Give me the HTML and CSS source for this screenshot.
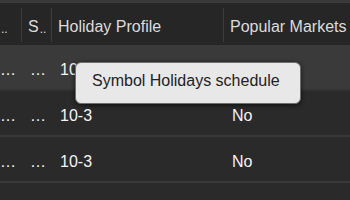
FILE: index.html
```html
<!DOCTYPE html>
<html>
<head>
<meta charset="utf-8">
<link rel="stylesheet" href="styles.css">
</head>
<body>
<div class="grid-wrap">
  <div class="topstrip"></div>
  <div class="row head">
    <div class="hcell"><span class="hlabel first"><span class="dots">..</span></span></div>
    <div class="hcell"><span class="hlabel">S<span class="dots">..</span></span></div>
    <div class="hcell"><span class="hlabel">Holiday Profile</span></div>
    <div class="hcell"><span class="hlabel last">Popular Markets</span></div>
  </div>
  <div class="row body hover">
    <div class="cell first">…</div>
    <div class="cell">…</div>
    <div class="cell">10-3</div>
    <div class="cell">No</div>
  </div>
  <div class="row body">
    <div class="cell first">…</div>
    <div class="cell">…</div>
    <div class="cell">10-3</div>
    <div class="cell">No</div>
  </div>
  <div class="row body">
    <div class="cell first">…</div>
    <div class="cell">…</div>
    <div class="cell">10-3</div>
    <div class="cell">No</div>
  </div>
  <div class="row body">
    <div class="cell first">…</div>
    <div class="cell">…</div>
    <div class="cell">10-3</div>
    <div class="cell">No</div>
  </div>
  <div class="tooltip">Symbol Holidays schedule</div>
</div>
</body>
</html>
```

FILE: styles.css
```css
html, body {
  margin: 0;
  padding: 0;
  background: #2a2a2a;
}
body {
  width: 350px;
  height: 200px;
  overflow: hidden;
  font-family: "Liberation Sans", Arial, sans-serif;
  font-size: 16px;
}
.grid-wrap {
  position: relative;
  width: 350px;
  height: 200px;
  overflow: hidden;
}
.topstrip {
  height: 3px;
  background: #3b3b3b;
}
.row {
  display: grid;
  grid-template-columns: 22px 30px 172px 220px;
  width: 444px;
}
.head {
  height: 42px;
  background: #262626;
}
.hcell {
  display: flex;
  align-items: stretch;
  padding: 5px 0 3px;
  overflow: hidden;
}
.hlabel {
  flex: 1;
  display: flex;
  align-items: center;
  padding: 3px 0 0 6px;
  border-right: 1px solid #3c3c3c;
  color: #dcdcdc;
  white-space: nowrap;
  overflow: hidden;
  line-height: 18px;
}
.hlabel.first {
  padding-left: 0;
}
.hlabel.last {
  border-right: none;
}
.dots {
  font-size: 12px;
  margin-left: 1px;
  align-self: center;
  padding-top: 5px;
}
.body {
  height: 44px;
  border-bottom: 2px solid #383838;
  background: #2a2a2a;
}
.body.hover {
  background: #3a3a3a;
  border-bottom-color: #323232;
}
.cell {
  display: flex;
  align-items: center;
  padding: 5px 0 0 8px;
  color: #f4f4f4;
  white-space: nowrap;
  overflow: hidden;
  line-height: 18px;
}
.cell.first {
  padding-left: 0;
}
.tooltip {
  position: absolute;
  left: 75px;
  top: 62px;
  width: 193px;
  height: 18px;
  padding: 9px 15px 13px 16px;
  box-sizing: content-box;
  background: #e8e8e8;
  border: 1px solid #6e6e6e;
  border-radius: 6px;
  box-shadow: 0 1px 4px rgba(0, 0, 0, 0.7);
  color: #222222;
  line-height: 18px;
  white-space: nowrap;
}
```
